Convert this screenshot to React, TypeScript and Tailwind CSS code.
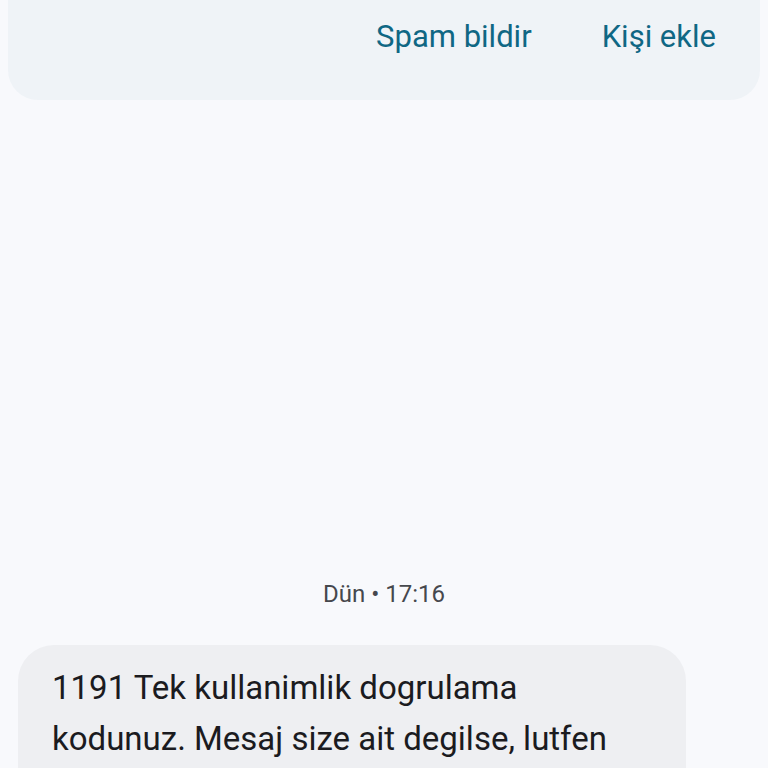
export default function App() {
  return (
    <div className="w-[768px] h-[768px] overflow-hidden bg-[#f8f9fc] flex flex-col" style={{ fontFamily: 'Roboto, "Noto Sans", sans-serif' }}>
      <div className="shrink-0 mx-[8px] h-[100px] bg-[#eff3f7] rounded-b-[30px] flex justify-end items-start pr-[44px] pt-[21px] gap-[70px]">
        <span className="text-[31px] leading-none text-[#0f6784]">Spam bildir</span>
        <span className="text-[31px] leading-none text-[#0f6784]">Kişi ekle</span>
      </div>
      <div className="flex-1" />
      <div className="text-center text-[24px] text-[#46484d] leading-none mb-[39px]">Dün • 17:16</div>
      <div className="shrink-0 ml-[18px] w-[668px] h-[160px] bg-[#eeeff2] rounded-t-[36px] pl-[34px] pt-[17px] text-[33px] leading-[51px] text-[#1b1b1f] mb-[-37px]">
        <div className="w-[596px]">1191 Tek kullanimlik dogrulama kodunuz. Mesaj size ait degilse, lutfen</div>
      </div>
    </div>
  );
}
